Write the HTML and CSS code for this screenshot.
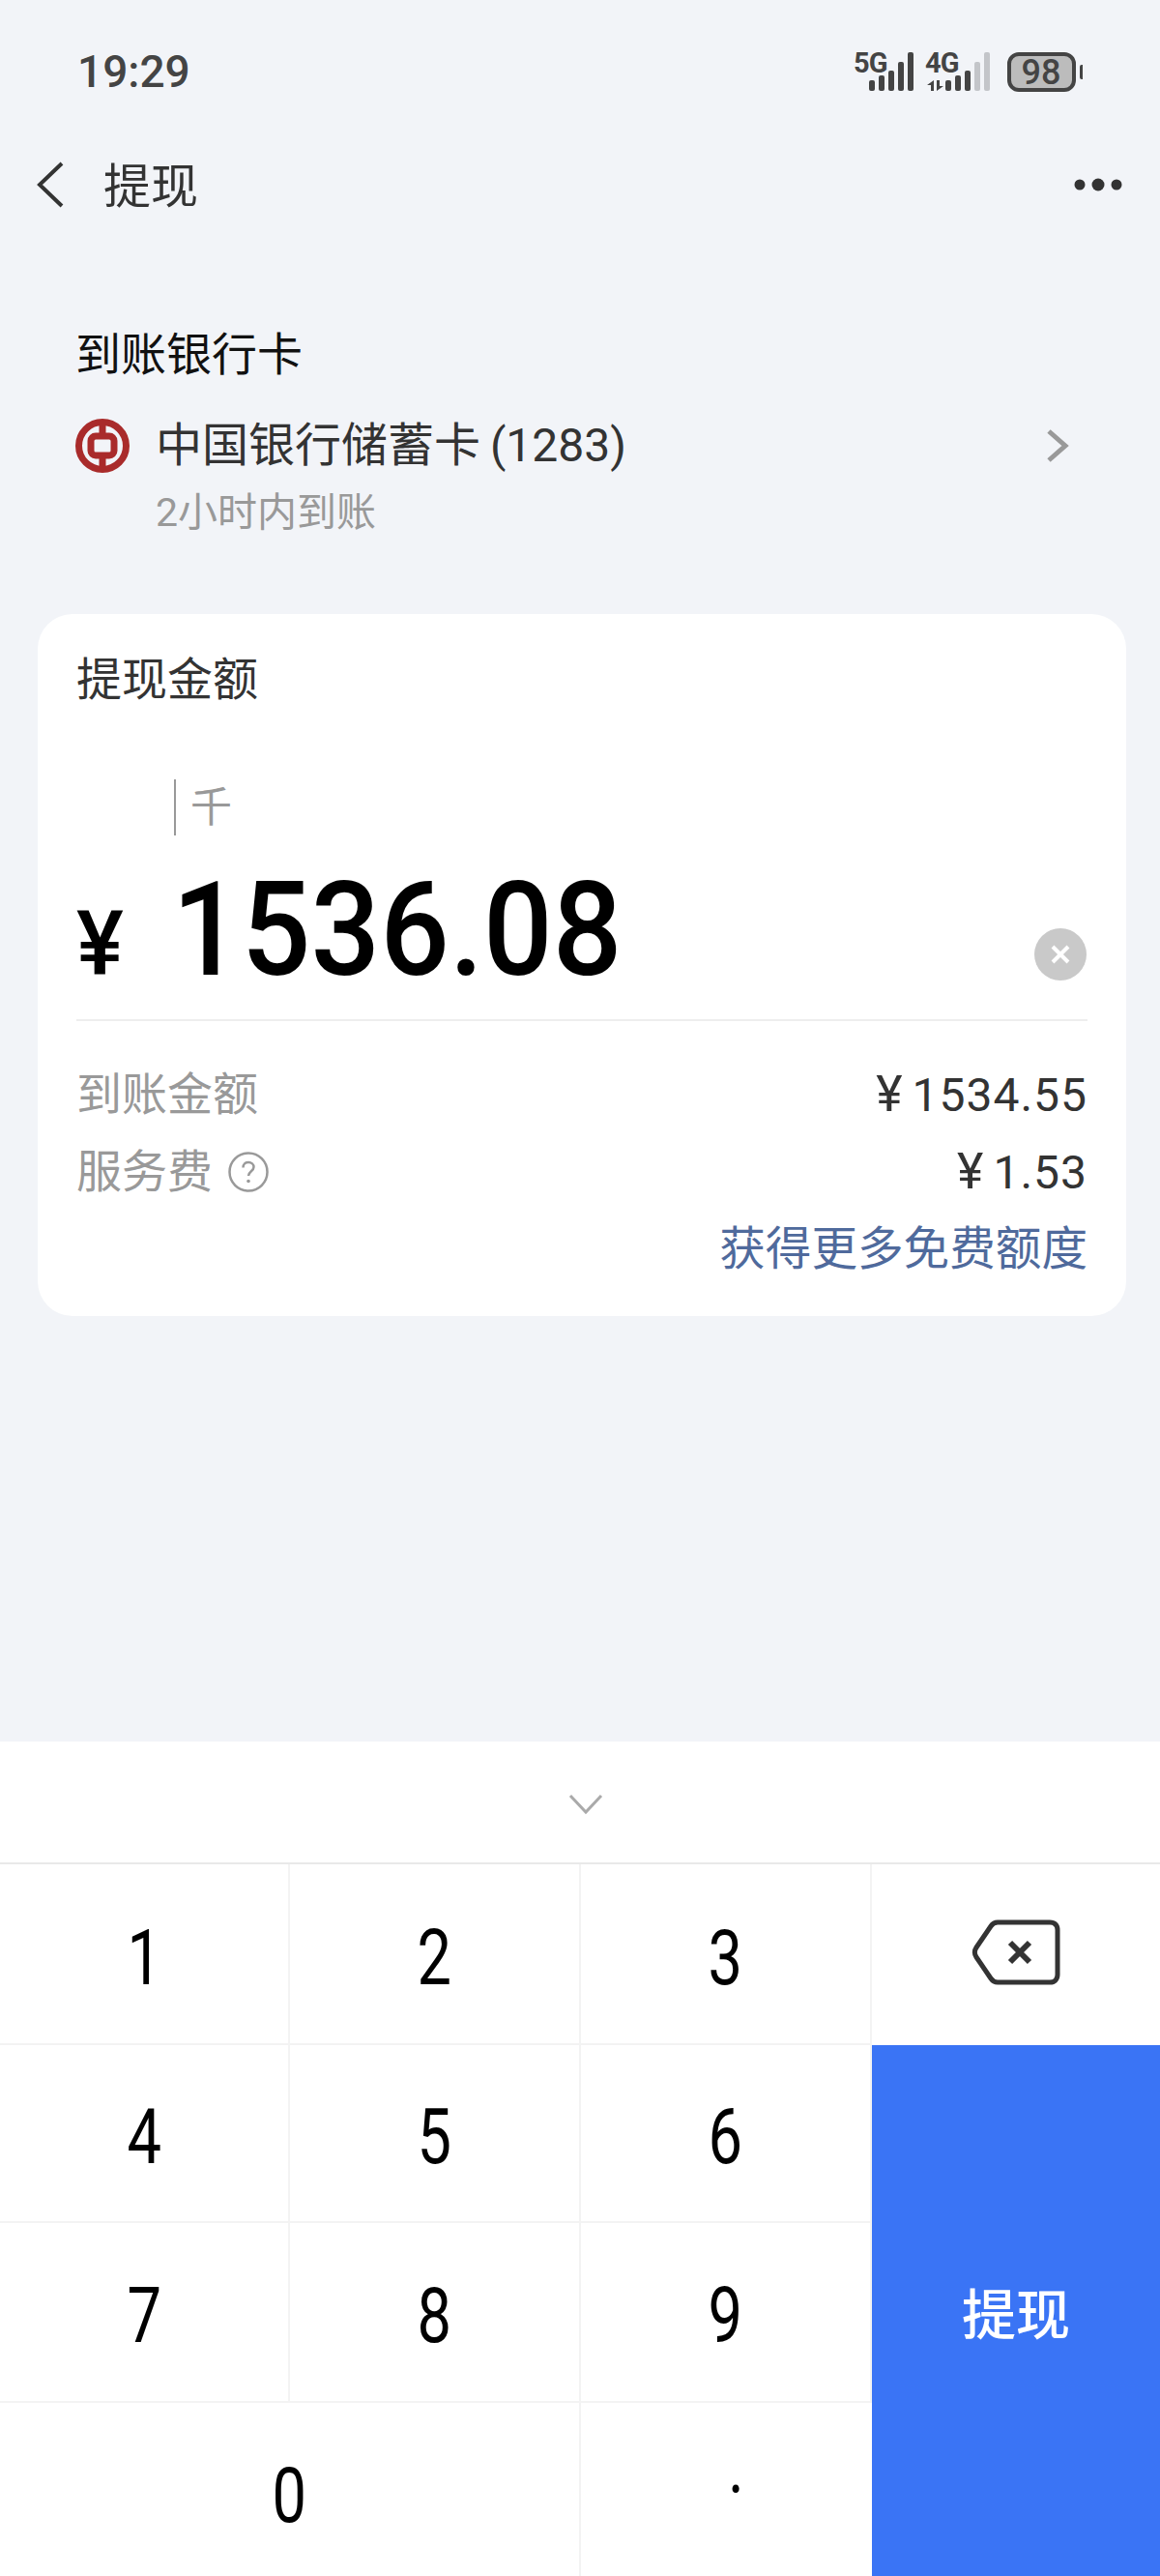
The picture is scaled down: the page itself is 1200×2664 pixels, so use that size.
FILE: index.html
```html
<!DOCTYPE html>
<html>
<head>
    <meta name="viewport" content="width=device-width, initial-scale=1">
    <title>提现</title>
    <link rel="stylesheet" href="styles.css">
</head>
<body>
<div class="page">

  <div class="statusbar">
    <span class="time">19:29</span>
    <svg class="status-icons" width="240" height="64" viewBox="880 41 240 64">
      <text class="net" x="883" y="74">5G</text>
      <rect class="bar" x="899" y="82" width="6" height="11" rx="2"/>
      <rect class="bar" x="909" y="77" width="6" height="16" rx="2"/>
      <rect class="bar" x="919" y="72" width="6" height="21" rx="2"/>
      <rect class="bar" x="929" y="63" width="6" height="30" rx="2"/>
      <rect class="bar" x="939" y="53" width="6" height="40" rx="2"/>
      <text class="net" x="957" y="74">4G</text>
      <path class="arrows" d="M966 82v11h-3v-6h-4zM969 93V82h3v6h4z"/>
      <rect class="bar" x="978" y="82" width="6" height="11" rx="2"/>
      <rect class="bar" x="988" y="77" width="6" height="16" rx="2"/>
      <rect class="bar" x="998" y="72" width="6" height="21" rx="2"/>
      <rect class="bar-off" x="1008" y="63" width="6" height="30" rx="2"/>
      <rect class="bar-off" x="1018" y="53" width="6" height="40" rx="2"/>
      <rect class="batt" x="1044" y="55" width="67" height="37" rx="10"/>
      <rect class="bar" x="1117" y="66" width="5" height="15" rx="2"/>
      <text class="batt-num" x="1077" y="86">98</text>
    </svg>
  </div>

  <div class="nav">
    <svg class="back" width="30" height="48" viewBox="0 0 30 48">
      <path d="M27 2L4 24l23 22"/>
    </svg>
    <span class="nav-title">提现</span>
    <svg class="more" width="50" height="14" viewBox="0 0 50 14">
      <circle cx="6" cy="7" r="5.5"/>
      <circle cx="25" cy="7" r="6.5"/>
      <circle cx="44" cy="7" r="5.5"/>
    </svg>
  </div>

  <div class="bank">
    <div class="bank-title">到账银行卡</div>
    <div class="bank-row">
      <svg class="bank-logo" width="56" height="56" viewBox="0 0 56 56">
        <circle cx="28" cy="28" r="24.5"/>
        <rect x="16" y="18" width="24" height="20" rx="5"/>
        <path d="M28 4v14M28 38v14"/>
      </svg>
      <span class="bank-name">中国银行储蓄卡 (1283)</span>
      <svg class="arrow" width="26" height="36" viewBox="0 0 26 36">
        <path d="M4 3l17 15L4 33"/>
      </svg>
    </div>
    <div class="bank-note">2小时内到账</div>
  </div>

  <div class="card">
    <div class="card-title">提现金额</div>
    <div class="hint">
      <span class="cursor"></span>
      <span class="hint-text">千</span>
    </div>
    <div class="amount">
      <span class="yen">¥</span>
      <span class="value">1536.08</span>
      <svg class="clear" width="56" height="56" viewBox="0 0 56 56">
        <circle cx="28" cy="28" r="27"/>
        <path d="M20 20l16 16M36 20L20 36"/>
      </svg>
    </div>
    <div class="rows">
      <div class="row">
        <span class="label">到账金额</span>
        <span class="money"><span class="money-yen">¥</span>1534.55</span>
      </div>
      <div class="row">
        <span class="label">服务费
          <svg class="help" width="42" height="42" viewBox="0 0 42 42">
            <circle cx="21" cy="21" r="19.5"/>
            <path d="M15.5 16.5c0-3.500 2.500-5.500 5.500-5.500s5.500 2 5.500 5c0 4-5.500 4.500-5.500 9"/>
            <circle class="help-dot" cx="21" cy="30.500" r="1.800"/>
          </svg>
        </span>
        <span class="money"><span class="money-yen">¥</span>1.53</span>
      </div>
      <div class="row row-link">
        <span class="link">获得更多免费额度</span>
      </div>
    </div>
  </div>

  <div class="keyboard">
    <div class="kb-top">
      <svg class="kb-hide" width="36" height="22" viewBox="0 0 36 22">
        <path d="M2 2l16 17L34 2"/>
      </svg>
    </div>
    <div class="keys">
      <div class="key"><span>1</span></div>
      <div class="key"><span>2</span></div>
      <div class="key"><span>3</span></div>
      <div class="key key-del">
        <svg width="92" height="68" viewBox="0 0 92 68">
          <path class="del-shape" d="M27 3h54c5 0 8 3 8 8v46c0 5-3 8-8 8H27c-3 0-5-1-7-4L5 39c-2-3-2-7 0-10L20 7c2-3 4-4 7-4z"/>
          <path class="del-x" d="M40 24l20 20M60 24L40 44"/>
        </svg>
      </div>
      <div class="key"><span>4</span></div>
      <div class="key"><span>5</span></div>
      <div class="key"><span>6</span></div>
      <div class="key-submit">提现</div>
      <div class="key"><span>7</span></div>
      <div class="key"><span>8</span></div>
      <div class="key"><span>9</span></div>
      <div class="key key-zero"><span>0</span></div>
      <div class="key key-dot"><span>·</span></div>
    </div>
  </div>

</div>
</body>
</html>
```

FILE: styles.css
```css
* {
    box-sizing: border-box;
}

body {
    margin: 0;
    font-family: Roboto, "Noto Sans CJK SC", sans-serif;
    color: #333333;
    background-color: #f2f4f8;
}

.page {
    width: 1200px;
    height: 2664px;
    display: flex;
    flex-direction: column;
    overflow: hidden;
}

/* status bar */
.statusbar {
    height: 148px;
    padding: 0 80px 0 80px;
    display: flex;
    align-items: center;
    justify-content: space-between;
}

.time {
    font-size: 46px;
    font-weight: 500;
    color: #444444;
}

.status-icons {
    display: block;
}

.net {
    font-size: 29px;
    font-weight: 700;
    fill: #444444;
    letter-spacing: -1px;
}

.bar {
    fill: #444444;
}

.bar-off {
    fill: #c3c5c9;
}

.arrows {
    fill: #444444;
}

.batt {
    fill: #bcbcbc;
    stroke: #444444;
    stroke-width: 4;
}

.batt-num {
    font-size: 36px;
    font-weight: 500;
    fill: #444444;
    text-anchor: middle;
}

/* title bar */
.nav {
    height: 86px;
    padding: 0 39px 0 37px;
    display: flex;
    align-items: center;
}

.back path {
    fill: none;
    stroke: #333333;
    stroke-width: 4;
}

.nav-title {
    margin-left: 40px;
    margin-top: 5px;
    font-size: 49px;
    line-height: 60px;
}

.more {
    margin-left: auto;
    fill: #333333;
}

/* bank card */
.bank {
    margin-top: 103px;
    padding: 0 93px 0 78px;
}

.bank-title {
    font-size: 47px;
    line-height: 60px;
    color: #111111;
}

.bank-row {
    margin-top: 34px;
    height: 60px;
    display: flex;
    align-items: center;
}

.bank-logo {
    fill: none;
    stroke: #a92b2b;
    stroke-width: 7;
}

.bank-name {
    margin-left: 27px;
    font-size: 48px;
    line-height: 60px;
    word-spacing: -2px;
}

.arrow {
    margin-left: auto;
    fill: none;
    stroke: #999999;
    stroke-width: 5;
}

.bank-note {
    margin-top: 14px;
    margin-left: 83px;
    font-size: 41px;
    line-height: 50px;
    color: #999999;
}

/* amount card */
.card {
    margin: 80px 35px 0 39px;
    height: 726px;
    padding: 38px 40px 0;
    background-color: #ffffff;
    border-radius: 36px;
}

.card-title {
    font-size: 47px;
    line-height: 60px;
}

.hint {
    margin-top: 73px;
    height: 58px;
    padding-left: 101px;
    display: flex;
    align-items: center;
}

.cursor {
    width: 2px;
    height: 58px;
    background-color: #999999;
}

.hint-text {
    margin-left: 15px;
    font-size: 43px;
    line-height: 58px;
    color: #999999;
}

.amount {
    margin-top: 28px;
    height: 140px;
    display: flex;
    align-items: baseline;
    position: relative;
}

.yen {
    width: 99px;
    font-size: 92px;
    font-weight: 500;
    line-height: 140px;
    color: #000000;
}

.value {
    font-size: 135px;
    font-weight: 500;
    line-height: 140px;
    color: #000000;
    transform: scaleX(0.935);
    transform-origin: left;
}

.clear {
    position: absolute;
    right: 0;
    top: 67px;
}

.clear circle {
    fill: #c9c9c9;
}

.clear path {
    fill: none;
    stroke: #ffffff;
    stroke-width: 4;
}

.rows {
    margin-top: 22px;
    padding-top: 46px;
    border-top: 2px solid #eeeeee;
    display: flex;
    flex-direction: column;
    gap: 20px;
}

.row {
    height: 60px;
    display: flex;
    align-items: center;
    justify-content: space-between;
}

.row-link {
    justify-content: flex-end;
}

.label {
    font-size: 47px;
    line-height: 60px;
    color: #999999;
    display: flex;
    align-items: center;
}

.help {
    margin-left: 16px;
    fill: none;
    stroke: #999999;
    stroke-width: 2.500;
}

.help-dot {
    fill: #999999;
    stroke: none;
}

.money {
    font-size: 48px;
    line-height: 60px;
    letter-spacing: 1px;
}

.money-yen {
    margin-right: 9px;
    font-size: 52px;
}

.link {
    font-size: 47.600px;
    line-height: 60px;
    color: #4f6a9c;
}

/* number keyboard */
.keyboard {
    margin-top: auto;
    background-color: #ffffff;
}

.kb-top {
    height: 127px;
    padding-top: 4px;
    border-bottom: 2px solid #e9e9e9;
    display: flex;
    align-items: center;
    justify-content: center;
}

.kb-hide {
    margin-left: 12px;
}

.kb-hide path {
    fill: none;
    stroke: #aaaaaa;
    stroke-width: 3;
}

.keys {
    display: grid;
    grid-template-columns: 300px 301px 301px 298px;
    grid-template-rows: 187px 184px 186px 179px;
}

.key {
    padding-top: 8px;
    border-right: 2px solid #f3f3f3;
    border-bottom: 2px solid #f3f3f3;
    display: flex;
    align-items: center;
    justify-content: center;
    font-size: 79px;
    font-weight: 400;
    color: #000000;
}

.key span {
    display: block;
    transform: scaleX(0.8);
}

.key-del {
    padding-top: 0;
    padding-bottom: 6px;
    border-right: 0;
    border-bottom: 0;
}

.del-shape {
    fill: none;
    stroke: #333333;
    stroke-width: 5;
}

.del-x {
    fill: none;
    stroke: #333333;
    stroke-width: 6;
}

.key-submit {
    grid-column: 4;
    grid-row: 2 / 5;
    background-color: #3a74f5;
    color: #ffffff;
    font-size: 56px;
    font-weight: 500;
    display: flex;
    align-items: center;
    justify-content: center;
}

.key-zero {
    grid-column: 1 / 3;
    padding-top: 12px;
    border-bottom: 0;
}

.key-dot {
    padding-top: 0;
    padding-left: 20px;
    border-right: 0;
    border-bottom: 0;
}
```
